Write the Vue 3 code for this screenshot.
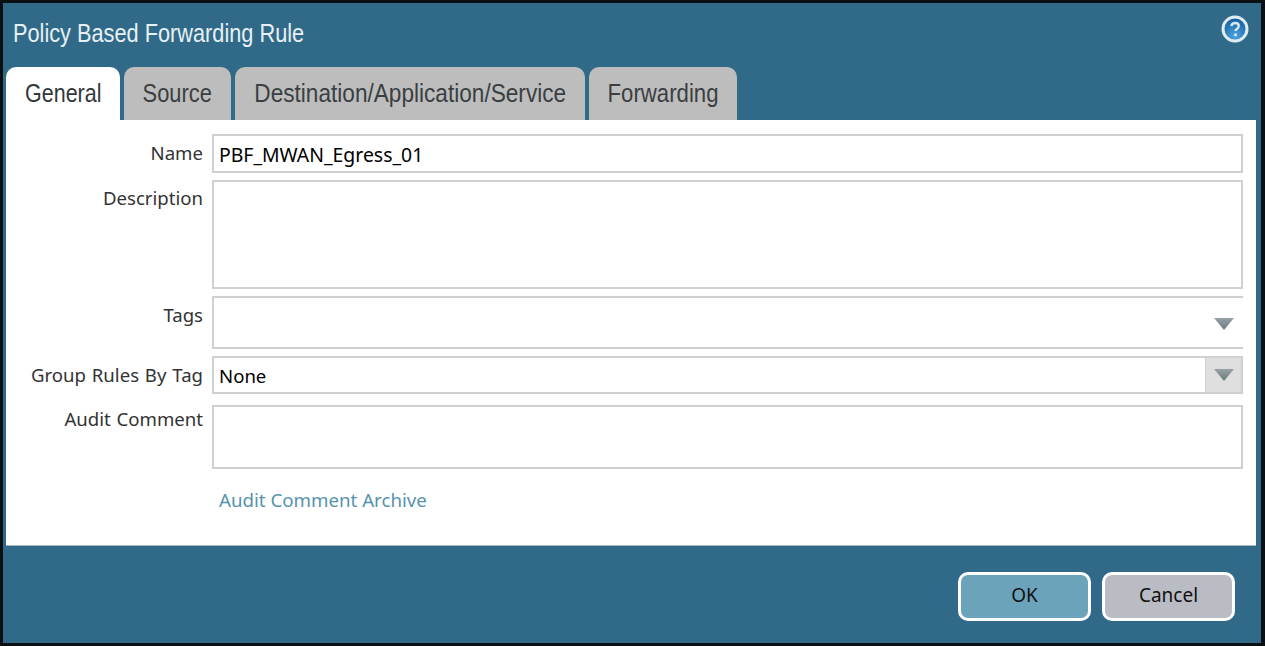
<script setup>
const tabs = [
  { label: 'General', width: 114, scale: 0.826, active: true },
  { label: 'Source', width: 107, scale: 0.84 },
  { label: 'Destination/Application/Service', width: 350, scale: 0.87 },
  { label: 'Forwarding', width: 148, scale: 0.853 }
]
</script>

<template>
  <div class="dialog">
    <header class="titlebar">
      <h1 class="title">Policy Based Forwarding Rule</h1>
      <svg class="help" width="28" height="28" viewBox="0 0 28 28" aria-label="Help">
        <defs>
          <radialGradient id="helpFill" cx="50%" cy="78%" r="75%">
            <stop offset="0%" stop-color="#4fa6de" />
            <stop offset="100%" stop-color="#0f5c9e" />
          </radialGradient>
          <linearGradient id="arrowFill" x1="0" y1="0" x2="0" y2="1">
            <stop offset="0%" stop-color="#98a2a6" />
            <stop offset="100%" stop-color="#6b7a7e" />
          </linearGradient>
        </defs>
        <circle cx="14" cy="14" r="12" fill="url(#helpFill)" stroke="#dfecf3" stroke-width="3" />
        <path d="M10.4 11.2c.3-2.2 1.8-3.2 3.8-3.2 2.2 0 3.6 1.2 3.6 3 0 1.5-.9 2.3-2 3-.9.6-1.3 1-1.3 2.1" fill="none" stroke="#dbe8ef" stroke-width="2.3" />
        <circle cx="14.5" cy="19.7" r="1.5" fill="#dbe8ef" />
      </svg>
    </header>

    <nav class="tabs">
      <div
        v-for="tab in tabs"
        :key="tab.label"
        class="tab"
        :class="{ active: tab.active }"
        :style="{ width: tab.width + 'px' }"
      ><span class="tab-text" :style="{ transform: 'scaleX(' + tab.scale + ')' }">{{ tab.label }}</span></div>
    </nav>

    <main class="panel">
      <div class="form">
        <label class="label">Name</label>
        <div class="field name">PBF_MWAN_Egress_01</div>

        <label class="label raised">Description</label>
        <div class="field desc"></div>

        <label class="label">Tags</label>
        <div class="field tags">
          <svg class="arrow" width="20" height="12" viewBox="0 0 20 12">
            <path d="M0 0h20l-10 12z" fill="url(#arrowFill)" />
          </svg>
        </div>

        <label class="label">Group Rules By Tag</label>
        <div class="field group">
          <span class="value">None</span>
          <span class="drop">
            <svg width="20" height="12" viewBox="0 0 20 12">
              <path d="M0 0h20l-10 12z" fill="url(#arrowFill)" />
            </svg>
          </span>
        </div>

        <label class="label raised">Audit Comment</label>
        <div class="field audit"></div>

        <span></span>
        <a class="link">Audit Comment Archive</a>
      </div>
    </main>

    <footer class="footer">
      <button class="btn ok">OK</button>
      <button class="btn cancel">Cancel</button>
    </footer>
  </div>
</template>

<style>
html, body { margin: 0; background: #000; }
</style>

<style scoped>
.dialog {
  box-sizing: border-box;
  width: 1265px;
  height: 646px;
  background: #316a88;
  border: solid #0a0f14;
  border-width: 3px 4px 3px 3px;
  padding: 0 5px 0 3px;
  display: flex;
  flex-direction: column;
  font-family: "Noto Sans", "Open Sans", sans-serif;
  overflow: hidden;
}
.titlebar {
  height: 64px;
  flex: none;
  display: flex;
  justify-content: space-between;
  padding-left: 7px;
  padding-right: 7px;
}
.title {
  margin: 15px 0 0;
  font: 400 26px/30px "Liberation Sans", sans-serif;
  color: #e6f0f5;
  transform: scaleX(0.836);
  transform-origin: left center;
  white-space: nowrap;
}
.help { margin-top: 12px; }
.tabs {
  display: flex;
  gap: 4px;
  height: 53px;
  flex: none;
}
.tab {
  box-sizing: border-box;
  border-radius: 10px 10px 0 0;
  background: #bdbdbd;
  color: #3a3f42;
  font: 400 26px/53px "Liberation Sans", sans-serif;
  display: flex;
  justify-content: center;
  white-space: nowrap;
}
.tab-text { display: block; flex: none; }
.tab.active {
  background: #fff;
  color: #33383b;
}
.panel {
  height: 426px;
  flex: none;
  box-sizing: border-box;
  background: #fff;
  border-bottom: 1px solid #a9b9c3;
  padding: 14px 0 0;
}
.form {
  display: grid;
  grid-template-columns: 197px 1031px;
  column-gap: 9px;
  grid-template-rows: 39px 109px 53px 38px 64px auto;
  row-gap: 7px;
}
.label {
  text-align: right;
  color: #333;
  font-size: 18.6px;
  word-spacing: 1px;
  line-height: 38px;
}
.raised { line-height: 36px; }
.field {
  box-sizing: border-box;
  border: 2px solid #d0d0d0;
  color: #000;
  font-size: 19.4px;
  line-height: 38px;
  padding-left: 5px;
  background: #fff;
}
.tags {
  border-right: none;
  position: relative;
}
.arrow {
  position: absolute;
  right: 9px;
  top: 20px;
}
.group {
  display: flex;
  justify-content: space-between;
  line-height: 36px;
}
.value { font-size: 18.6px; }
.drop {
  width: 35px;
  background: #dfdfdf;
  border-left: 1px solid #d0d0d0;
  display: flex;
  align-items: center;
  justify-content: center;
}
.audit { margin-top: 4px; height: 64px; }
.link {
  color: #5593ae;
  font-size: 18.7px;
  line-height: 26px;
  padding-left: 7px;
  margin-top: 15px;
}
.footer {
  flex: 1;
  display: flex;
  justify-content: flex-end;
  gap: 11px;
  padding: 26px 21px 0 0;
}
.btn {
  box-sizing: border-box;
  width: 133px;
  height: 49px;
  border: 3px solid #fff;
  border-radius: 10px;
  font-family: inherit;
  font-size: 19px;
  line-height: 41px;
  color: #111;
  padding: 0 0 2px;
}
.ok { background: #6ba3ba; }
.cancel { background: #b9bcc2; }
</style>
